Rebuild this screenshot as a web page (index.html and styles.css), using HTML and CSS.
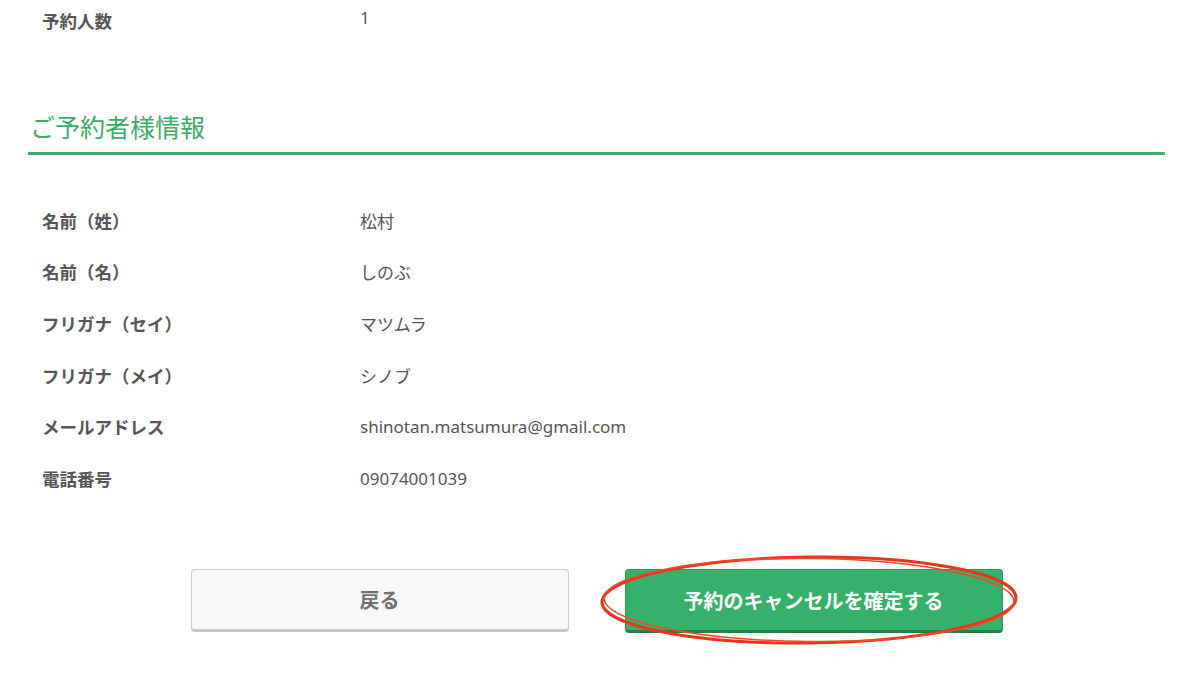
FILE: index.html
```html
<!DOCTYPE html>
<html lang="ja">
<head>
<meta charset="utf-8">
<link rel="stylesheet" href="styles.css">
</head>
<body>
<div class="page">
  <div class="rows rows-top">
    <div class="row"><div class="label">予約人数</div><div class="value value-num">1</div></div>
  </div>

  <h2 class="section-title">ご予約者様情報</h2>

  <div class="rows">
    <div class="row"><div class="label">名前（姓）</div><div class="value">松村</div></div>
    <div class="row"><div class="label">名前（名）</div><div class="value">しのぶ</div></div>
    <div class="row"><div class="label">フリガナ（セイ）</div><div class="value">マツムラ</div></div>
    <div class="row"><div class="label">フリガナ（メイ）</div><div class="value">シノブ</div></div>
    <div class="row"><div class="label">メールアドレス</div><div class="value">shinotan.matsumura@gmail.com</div></div>
    <div class="row"><div class="label">電話番号</div><div class="value">09074001039</div></div>
  </div>

  <div class="actions">
    <button class="btn btn-back">戻る</button>
    <div class="btn-wrap">
      <button class="btn btn-confirm">予約のキャンセルを確定する</button>
      <svg class="circle-mark" viewBox="0 0 430 100" width="430" height="100">
        <ellipse cx="215" cy="50" rx="207" ry="43" fill="none" stroke="#e8361c" stroke-width="3" transform="rotate(-0.6 215 50)"/>
        <ellipse cx="215" cy="50" rx="205" ry="41.5" fill="none" stroke="#ee4a2a" stroke-width="1.5" transform="rotate(0.5 215 50)"/>
      </svg>
    </div>
  </div>
</div>
</body>
</html>
```

FILE: styles.css
```css
html, body {
  margin: 0;
  padding: 0;
  background: #ffffff;
}

body {
  font-family: "Noto Sans CJK JP", "Noto Sans", sans-serif;
  color: #555555;
  width: 1200px;
  height: 682px;
  overflow: hidden;
}

.page {
  width: 1137px;
  margin-left: 28px;
}

.rows-top {
  margin-top: -5px;
}

.row {
  display: grid;
  grid-template-columns: 318px 1fr;
  align-items: center;
  height: 51.6px;
  padding-left: 14px;
}

.label {
  font-size: 17.5px;
  font-weight: 700;
  color: #555555;
}

.value {
  font-family: "Noto Sans", "Noto Sans CJK JP", sans-serif;
  font-size: 17px;
  color: #555555;
}

.value-num {
  position: relative;
  top: -3px;
}

.section-title {
  margin: 61px 0 40px 0;
  padding: 0 0 8px 2px;
  font-size: 25px;
  font-weight: 400;
  color: #3aae6a;
  border-bottom: 3px solid #3aae6a;
  line-height: 36px;
}

.actions {
  display: flex;
  justify-content: center;
  gap: 56px;
  margin-top: 65px;
}

.btn {
  width: 378px;
  height: 63px;
  border-radius: 4px;
  font-family: "Noto Sans CJK JP", sans-serif;
  font-size: 20px;
  font-weight: 700;
  cursor: pointer;
  display: flex;
  align-items: center;
  justify-content: center;
}

.btn-back {
  background: #f8f8f8;
  color: #707070;
  border: 1px solid #cfcfcf;
  border-bottom: 3px solid #c8c8c8;
}

.btn-wrap {
  position: relative;
}

.btn-confirm {
  background: #36b16b;
  color: #ffffff;
  border: 1px solid #2d9a5a;
  border-bottom: 3px solid #257d49;
  width: 378px;
  height: 64px;
}

.circle-mark {
  position: absolute;
  left: -31px;
  top: -19px;
  pointer-events: none;
}
```
